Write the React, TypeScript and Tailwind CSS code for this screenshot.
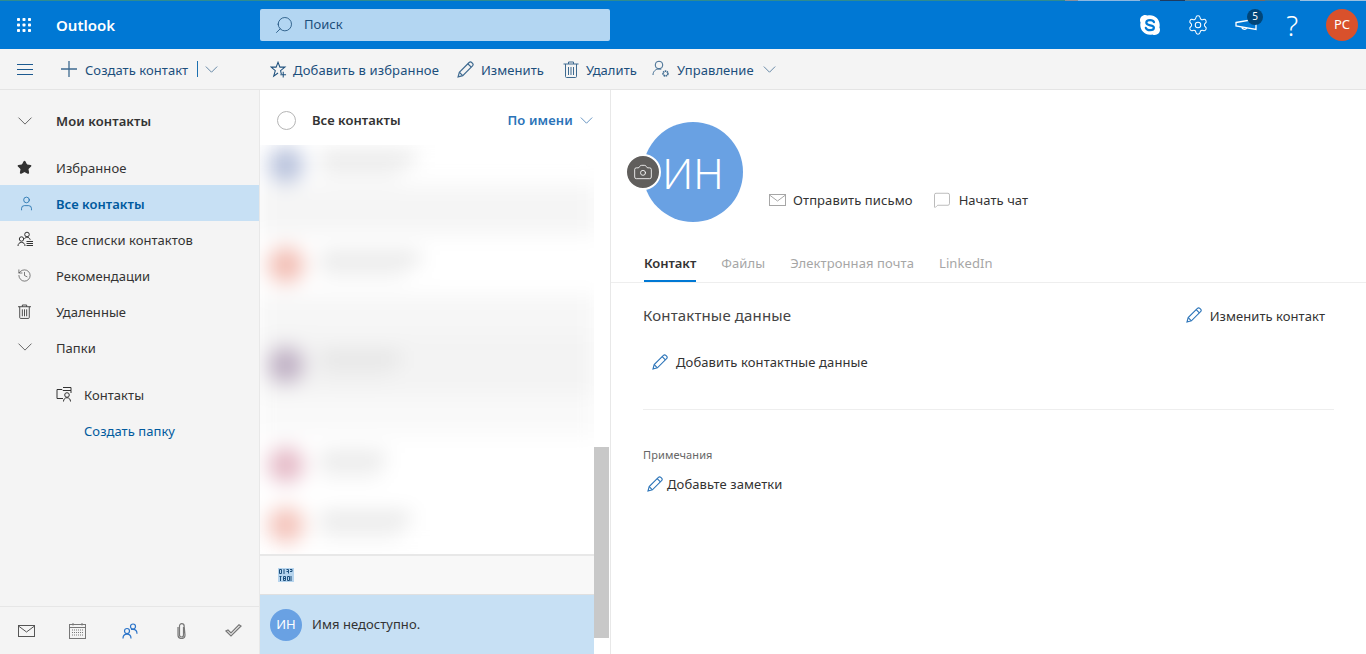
import { useState } from "react";
import { Search, Star, User, History, Settings, Camera, MessageSquare } from "lucide-react";
import type { ReactNode } from "react";

const FONT = "font-['Noto_Sans','Open_Sans',sans-serif]";

function Chevron({ className }: { className?: string }) {
  return (
    <svg viewBox="0 0 16 9" fill="none" stroke="currentColor" strokeWidth="1" className={className}>
      <path d="M.7.7 8 8l7.300-7.300" />
    </svg>
  );
}

function PencilIcon({ className }: { className?: string }) {
  return (
    <svg viewBox="0 0 16 16" fill="none" stroke="currentColor" strokeWidth="1.100" className={className}>
      <path d="M1 15l1.200-4.400L11.400 1.400a1.700 1.700 0 0 1 2.400 0l.8.800a1.700 1.700 0 0 1 0 2.400L5.400 13.800 1 15z" />
      <path d="M2.200 10.600l3.200 3.200M10.200 2.600l3.200 3.200" />
    </svg>
  );
}

function TrashIcon({ className }: { className?: string }) {
  return (
    <svg viewBox="0 0 15 17" fill="none" stroke="currentColor" strokeWidth="1" className={className}>
      <path d="M0 3h15M5 3V1h5v2M2 3v12.500c0 .5.300 1 1 1h9c.7 0 1-.5 1-1V3" />
      <path d="M5 6v8M7.500 6v8M10 6v8" />
    </svg>
  );
}

function GripIcon() {
  return (
    <svg viewBox="0 0 14 14" fill="#fff" className="h-[14px] w-[14px]">
      {[0, 5.500, 11].map((y) =>
        [0, 5.500, 11].map((x) => <rect key={`${x}-${y}`} x={x} y={y} width="3" height="3" rx=".8" />),
      )}
    </svg>
  );
}

function UserGear({ className }: { className?: string }) {
  return (
    <svg viewBox="0 0 18 18" fill="none" stroke="currentColor" strokeWidth="1" className={className}>
      <circle cx="7" cy="5" r="3.800" />
      <path d="M1 15c0-3.500 2.500-6 6-6 .8 0 1.500.1 2.200.4" />
      <circle cx="13.500" cy="13.500" r="2.400" strokeWidth="1.700" strokeDasharray="1.400 .5" />
    </svg>
  );
}

function StarPlus({ className }: { className?: string }) {
  return (
    <svg viewBox="0 0 18 18" fill="none" stroke="currentColor" strokeWidth="1.100" className={className}>
      <path d="M12 14l-.8-3.800 4.600-3.700h-5.300L8.500 1.300 6.500 6.500H1.200l4.400 3.700L3.900 16l4.600-3.300" />
      <path d="M14 11.500v6M11 14.500h6" />
    </svg>
  );
}

function ListPeople({ className }: { className?: string }) {
  return (
    <svg viewBox="0 0 16 16" fill="none" stroke="currentColor" strokeWidth="1" className={className}>
      <circle cx="4.500" cy="8" r="2.200" />
      <path d="M1 15c0-2.200 1.400-3.600 3.500-3.600S8 12.800 8 15" />
      <circle cx="10" cy="3.500" r="2.300" />
      <path d="M7.400 8c.5-1 1.400-1.800 2.600-1.800 1.500 0 2.800 1 3.200 2.600" />
      <path d="M9.500 10.500H16M9.500 12.500H16M9.500 14.500H16" />
    </svg>
  );
}

function FolderPerson({ className }: { className?: string }) {
  return (
    <svg viewBox="0 0 16 16" fill="none" stroke="currentColor" strokeWidth="1" className={className}>
      <path d="M7 12.500H1V3.500h5l1 1h8V7" />
      <path d="M7 1.500h8v3" />
      <circle cx="11" cy="9" r="2.300" />
      <path d="M7.500 15.500c0-2.200 1.400-3.800 3.500-3.800s3.500 1.600 3.500 3.800" />
    </svg>
  );
}

function SkypeLogo() {
  return (
    <svg viewBox="0 0 22 22" className="h-[22px] w-[22px]">
      <path
        fill="#fff"
        d="M6.200 1C3.300 1 1 3.300 1 6.200c0 .9.200 1.700.6 2.400-.2.700-.3 1.600-.3 2.400 0 5.300 4.300 9.700 9.700 9.700.8 0 1.600-.1 2.400-.3.700.4 1.600.6 2.400.6 2.900 0 5.200-2.300 5.200-5.200 0-.9-.2-1.700-.6-2.400.2-.8.300-1.600.3-2.400 0-5.300-4.300-9.700-9.700-9.700-.8 0-1.600.1-2.400.3C7.900 1.200 7.100 1 6.200 1z"
      />
      <path
        fill="none"
        stroke="#0078d4"
        strokeWidth="2.200"
        strokeLinecap="round"
        d="M15 8.200C14.500 6.900 13 6.200 11 6.200c-2.200 0-3.700 1-3.700 2.500 0 3.600 7.600 1.700 7.600 5 0 1.500-1.700 2.500-3.900 2.500-2.300 0-3.700-1-4.200-2.400"
      />
    </svg>
  );
}

function Horn() {
  return (
    <svg viewBox="0 0 22 14" fill="none" stroke="#fff" strokeWidth="1.300" className="h-[14px] w-[22px]">
      <path d="M1 4.500 21 1v10.500L1 8z" />
      <path d="M7 9c-.2 2.300 3.500 3.300 4.700 1" />
    </svg>
  );
}

function CalendarIcon() {
  return (
    <svg viewBox="0 0 17 16" fill="none" stroke="#777" strokeWidth="1" className="ml-[34px] h-4 w-[17px]">
      <rect x=".5" y="1.500" width="16" height="14" />
      <path d="M.5 4.500h16M4 0v2.500M13 0v2.500" />
      <path strokeDasharray="1 1" d="M3 7h11M3 9.500h11M3 12h11" />
    </svg>
  );
}

function PeopleIcon() {
  return (
    <svg viewBox="0 0 16 16" fill="none" stroke="#2a73c8" strokeWidth="1.200" className="ml-[36px] h-4 w-4">
      <circle cx="5" cy="8" r="2.500" />
      <path d="M1 15.500c0-2.700 1.600-4.300 4-4.300s4 1.600 4 4.300" />
      <circle cx="11" cy="3.500" r="2.500" />
      <path d="M9 6.500c.5-.2 1.300-.1 2-.1 2.400 0 4 1.700 4 4.300" />
    </svg>
  );
}

function ClipIcon() {
  return (
    <svg viewBox="0 0 9 16" fill="none" stroke="#777" strokeWidth="1.200" className="ml-[39px] h-4 w-[9px]">
      <path d="M6.500 4v8a2 2 0 0 1-4 0V3a2.300 2.300 0 0 1 4.600-.1L8 12a3.500 3.500 0 0 1-7 0V4" />
    </svg>
  );
}

function TodoIcon() {
  return (
    <svg viewBox="0 0 17 13" fill="none" stroke="#777" strokeWidth="1.200" className="ml-[39px] h-[13px] w-[17px]">
      <path d="M1 7l5 5L16 2 14 .8 6 9 3 6z" />
    </svg>
  );
}

function MailIcon({ className }: { className?: string }) {
  return (
    <svg viewBox="0 0 17 12" fill="none" stroke="currentColor" strokeWidth="1" className={className}>
      <rect x=".5" y=".5" width="16" height="11" />
      <path d="M.5 1l8 6 8-6" />
    </svg>
  );
}

function CodeGlyph() {
  return (
    <svg viewBox="0 0 16 14" className="h-[14px] w-4">
      <rect width="16" height="14" fill="#b7d5ee" />
      <path
        stroke="#1c4f7c"
        strokeWidth="1"
        fill="none"
        d="M1.500 1.500h2v4h-2zM6 1v5M8.500 1.500h2v4M8.500 3.500h2M12 1.500h2v2h-2M1.500 8.500h2M2.500 8v5M5.500 8.500h2v4h-2zM5.500 10.500h2M9.500 8.500h2v4h-2zM13 8v5"
      />
    </svg>
  );
}

function ToolbarItem({
  icon,
  label,
  caret,
  className = "",
}: {
  icon: ReactNode;
  label: string;
  caret?: boolean;
  className?: string;
}) {
  return (
    <div className={`flex items-center ${className}`}>
      {icon}
      <span className="ml-[7px] pt-[3px] text-[13px] tracking-[0.05px] text-[#1c4f7c]">{label}</span>
      {caret ? <Chevron className="ml-[9px] h-[7px] w-[13px] text-[#3e6a90]" /> : null}
    </div>
  );
}

function NavRow({ icon, label, active }: { icon: ReactNode; label: string; active?: boolean }) {
  return (
    <div className={`flex h-9 items-center pl-[17px] ${active ? "bg-[#c7e0f4] text-[#005a9e]" : "text-[#333333]"}`}>
      <span className="flex w-[39px] items-center">{icon}</span>
      <span className={`pt-[4px] text-[13px] tracking-[0.05px] ${active ? "font-semibold" : ""}`}>{label}</span>
    </div>
  );
}

const BLUR_ROWS = [
  { h: 40, bg: "bg-white", avatar: "bg-[#b8c2dc]", w: 95, w2: 80 },
  { h: 50, bg: "bg-[#f5f5f5]", avatar: "", w: 0, w2: 0 },
  { h: 60, bg: "bg-white", avatar: "bg-[#f2bdb3]", w: 100, w2: 85 },
  { h: 40, bg: "bg-[#f6f6f6]", avatar: "", w: 0, w2: 0 },
  { h: 60, bg: "bg-[#f3f3f3]", avatar: "bg-[#bfb0c4]", w: 80, w2: 70 },
  { h: 40, bg: "bg-[#f9f9f9]", avatar: "", w: 0, w2: 0 },
  { h: 60, bg: "bg-white", avatar: "bg-[#e5bac7]", w: 65, w2: 60 },
  { h: 60, bg: "bg-white", avatar: "bg-[#f4c3ba]", w: 90, w2: 80 },
];

export default function App() {
  const [selected] = useState("all");

  return (
    <div className={`flex h-[654px] w-[1366px] flex-col overflow-hidden bg-white ${FONT}`}>
      {/* suite header */}
      <header className="flex h-[49px] shrink-0 flex-col bg-[#0078d4]">
        <div className="flex h-px shrink-0">
          <div className="w-[1065px] bg-[#2f8c8f]" />
          <div className="w-[13px] bg-[#8a8f9a]" />
          <div className="w-[62px] bg-[#8db8e0]" />
          <div className="w-[20px] bg-[#4a6f8f]" />
          <div className="w-[25px] bg-[#1e3a5f]" />
          <div className="w-[55px] bg-[#5a7a8a]" />
          <div className="w-[25px] bg-[#7a6a60]" />
          <div className="w-[35px] bg-[#3a7a9a]" />
          <div className="flex-1 bg-[#9ac0e0]" />
        </div>
        <div className="flex flex-1 items-center pb-[1px]">
          <span className="ml-[17px]">
            <GripIcon />
          </span>
          <span className="ml-[25px] w-[204px] pt-[2px] text-[15px] font-semibold text-white">Outlook</span>
          <div className="flex h-8 w-[350px] items-center rounded-[2px] bg-[#b3d6f2] pl-[14px]">
            <Search className="h-[20px] w-[20px] -scale-x-100 text-[#1c4f7c]" strokeWidth={1} />
            <span className="ml-[10px] pt-[1px] text-[13px] text-[#1c4f7c]">Поиск</span>
          </div>
          <div className="ml-auto flex items-center pr-[8px]">
            <SkypeLogo />
            <Settings className="ml-[26px] h-[22px] w-[22px] text-white" strokeWidth={1.1} />
            <div className="relative ml-[26px] flex h-[22px] w-[22px] items-center">
              <Horn />
              <span className="absolute -top-[5px] left-[12px] flex h-4 w-4 items-center justify-center rounded-full bg-[#004578] text-[10px] text-white">
                5
              </span>
            </div>
            <span className="ml-[29px] text-[28px] leading-none font-light text-white">?</span>
            <div className="ml-[28px] flex h-8 w-8 items-center justify-center rounded-full bg-[#d9512c] text-[13px] text-white">
              РС
            </div>
          </div>
        </div>
      </header>

      {/* command bar */}
      <div className="flex h-[41px] shrink-0 items-center border-b border-[#e4e4e4] bg-[#f4f4f4]">
        <div className="flex w-[260px] items-center pl-[17px]">
          <span className="flex h-[11px] w-4 flex-col justify-between">
            <span className="h-px bg-[#1c5a90]" />
            <span className="h-px bg-[#1c5a90]" />
            <span className="h-px bg-[#1c5a90]" />
          </span>
          <svg viewBox="0 0 16 16" stroke="#3e6a90" strokeWidth="1.300" className="ml-[28px] h-4 w-4">
            <path d="M8 0v16M0 8h16" />
          </svg>
          <span className="ml-[8px] pt-[3px] text-[13px] tracking-[0.05px] text-[#1c4f7c]">Создать контакт</span>
          <span className="ml-[9px] h-4 w-px bg-[#1c70b0]" />
          <Chevron className="ml-[7px] h-[7px] w-[13px] text-[#3e6a90]" />
        </div>
        <div className="flex items-center pl-[10px]">
          <div className="flex items-center">
            <StarPlus className="h-[17px] w-[17px] text-[#1c4f7c]" />
            <span className="ml-[6px] pt-[3px] text-[13px] tracking-[0.15px] text-[#1c4f7c]">Добавить в избранное</span>
          </div>
          <ToolbarItem className="ml-[18px]" icon={<PencilIcon className="h-[17px] w-[17px] text-[#3e6a90]" />} label="Изменить" />
          <ToolbarItem className="ml-[19px]" icon={<TrashIcon className="h-[17px] w-[16px] text-[#3e6a90]" />} label="Удалить" />
          <ToolbarItem className="ml-[15px]" icon={<UserGear className="h-[18px] w-[18px] text-[#3e6a90]" />} label="Управление" caret />
        </div>
      </div>

      <div className="flex min-h-0 flex-1">
        {/* left nav */}
        <aside className="flex w-[259px] shrink-0 flex-col bg-[#f4f4f4]">
          <div className="flex h-[59px] items-center pl-[17px] pt-[2px]">
            <span className="w-[39px]">
              <Chevron className="h-2 w-4 text-[#555555]" />
            </span>
            <span className="pt-[3px] text-[13px] font-semibold tracking-[0.1px] text-[#333333]">Мои контакты</span>
          </div>
          <NavRow icon={<Star className="h-[15px] w-[15px] fill-[#333333] text-[#333333]" />} label="Избранное" />
          <NavRow
            icon={<User className="ml-px h-[17px] w-[17px]" strokeWidth={1} />}
            label="Все контакты"
            active={selected === "all"}
          />
          <NavRow icon={<ListPeople className="h-4 w-4" />} label="Все списки контактов" />
          <NavRow icon={<History className="h-[15px] w-[15px]" strokeWidth={1} />} label="Рекомендации" />
          <NavRow icon={<TrashIcon className="ml-px h-[15px] w-[13px]" />} label="Удаленные" />
          <NavRow icon={<Chevron className="h-2 w-4 text-[#555555]" />} label="Папки" />
          <div className="mt-[11px] flex h-9 items-center pl-[56px] text-[#333333]">
            <FolderPerson className="h-4 w-4" />
            <span className="ml-3 pt-[4px] text-[13px] tracking-[0.05px]">Контакты</span>
          </div>
          <div className="flex h-9 items-center pl-[84px] pt-[4px] text-[13px] tracking-[0.05px] text-[#005a9e]">
            Создать папку
          </div>
          <div className="mt-auto flex h-[48px] items-center border-t border-[#e6e6e6] pl-[18px]">
            <MailIcon className="h-3 w-[17px] text-[#555555]" />
            <CalendarIcon />
            <PeopleIcon />
            <ClipIcon />
            <TodoIcon />
          </div>
        </aside>
        <div className="w-px shrink-0 bg-[#e8e8e8]" />

        {/* contact list */}
        <section className="flex w-[351px] shrink-0">
          <div className="flex w-[334px] flex-col">
            <div className="flex h-[55px] shrink-0 items-center pt-[5px] pl-[17px]">
              <span className="h-[19px] w-[19px] rounded-full border border-[#b5b5b5]" />
              <span className="ml-[16px] pt-[1px] text-[13px] font-semibold tracking-[0.05px] text-[#333333]">Все контакты</span>
              <span className="ml-auto pt-[1px] text-[13px] font-semibold tracking-[0.15px] text-[#2a73b8]">По имени</span>
              <Chevron className="mr-px ml-[7px] h-[7px] w-[13px] text-[#3e78b0]" />
            </div>
            <div className="h-[409px] shrink-0 overflow-hidden">
              <div className="blur-[10px]">
                {BLUR_ROWS.map((row, i) => (
                  <div key={i} style={{ height: row.h }} className={`flex items-center pl-[8px] ${row.bg}`}>
                    {row.avatar ? <span className={`h-9 w-9 shrink-0 rounded-full ${row.avatar}`} /> : null}
                    {row.w ? (
                      <div className="ml-[16px] flex flex-col gap-[6px]">
                        <span style={{ width: row.w }} className="block h-[10px] bg-[#dedede]" />
                        <span style={{ width: row.w2 }} className="block h-[8px] bg-[#ebebeb]" />
                      </div>
                    ) : null}
                  </div>
                ))}
              </div>
            </div>
            <div className="flex h-[41px] shrink-0 items-center border-t-2 border-b border-t-[#e8e8e8] border-b-[#e0e0e0] bg-[#f8f8f8] pl-[18px]">
              <CodeGlyph />
            </div>
            <div className="flex flex-1 items-center bg-[#c7e0f4] pl-[10px]">
              <span className="flex h-8 w-8 items-center justify-center rounded-full bg-[#69a1e3] text-[13px] text-white">
                ИН
              </span>
              <span className="ml-[10px] text-[13px] tracking-[0.05px] text-[#333333]">Имя недоступно.</span>
            </div>
          </div>
          <div className="flex w-[17px] shrink-0 flex-col border-r border-[#e8e8e8]">
            <div className="h-[357px]" />
            <div className="h-[191px] w-[15px] bg-[#c8c8c8]" />
          </div>
        </section>

        {/* detail pane */}
        <main className="min-w-0 flex-1 bg-white">
          <div className="relative flex h-[146px] items-end pl-[32px] pt-[32px]">
            <div className="mb-[14px] flex h-[100px] w-[100px] shrink-0 items-center justify-center rounded-full bg-[#69a1e3] text-[42px] font-light text-white">
              ИН
            </div>
            <span className="absolute top-[64px] left-[14px] flex h-[36px] w-[36px] items-center justify-center rounded-full border-2 border-white bg-[#605e5c]">
              <Camera className="h-[20px] w-[20px] text-white" strokeWidth={1} />
            </span>
            <div className="mb-[14px] ml-[26px] flex items-center pb-[12px]">
              <MailIcon className="h-3 w-[17px] text-[#a6a6a6]" />
              <span className="ml-[7px] text-[13px] tracking-[0.1px] text-[#333333]">Отправить письмо</span>
              <MessageSquare className="ml-[20px] h-[18px] w-[18px] text-[#a6a6a6]" strokeWidth={1} />
              <span className="ml-[8px] text-[13px] tracking-[0.05px] text-[#333333]">Начать чат</span>
            </div>
          </div>
          <div className="flex h-[47px] items-end gap-[25px] border-b border-[#eeeeee] pl-[33px] text-[13px] tracking-[0.1px] text-[#a6a6a6]">
            <span className="flex h-[46px] items-center border-b-2 border-[#0078d4] pt-[11px] font-semibold tracking-[-0.05px] text-[#333333]">Контакт</span>
            <span className="flex h-[46px] items-center pt-[9px]">Файлы</span>
            <span className="flex h-[46px] items-center pt-[9px]">Электронная почта</span>
            <span className="flex h-[46px] items-center pt-[9px]">LinkedIn</span>
          </div>
          <div className="mx-[32px] border-b border-[#eeeeee] pb-[37px]">
            <div className="flex items-center justify-between pt-[21px]">
              <span className="text-[15px] tracking-[0.15px] text-[#444444]">Контактные данные</span>
              <div className="flex items-center pr-[9px]">
                <PencilIcon className="h-4 w-4 text-[#2a73b8]" />
                <span className="ml-[8px] pt-[2px] text-[13px] tracking-[0.05px] text-[#333333]">Изменить контакт</span>
              </div>
            </div>
            <div className="mt-[26px] flex items-center pl-[9px]">
              <PencilIcon className="h-4 w-4 text-[#2a73b8]" />
              <span className="ml-[8px] text-[13px] tracking-[0.1px] text-[#333333]">Добавить контактные данные</span>
            </div>
          </div>
          <div className="px-[32px] pt-[36px]">
            <div className="pt-px text-[11px] tracking-[0.1px] text-[#666666]">Примечания</div>
            <div className="mt-[11px] flex items-center pl-[4px]">
              <PencilIcon className="h-4 w-4 text-[#2a73b8]" />
              <span className="ml-[4px] text-[13px] tracking-[0.1px] text-[#333333]">Добавьте заметки</span>
            </div>
          </div>
        </main>
      </div>
    </div>
  );
}
